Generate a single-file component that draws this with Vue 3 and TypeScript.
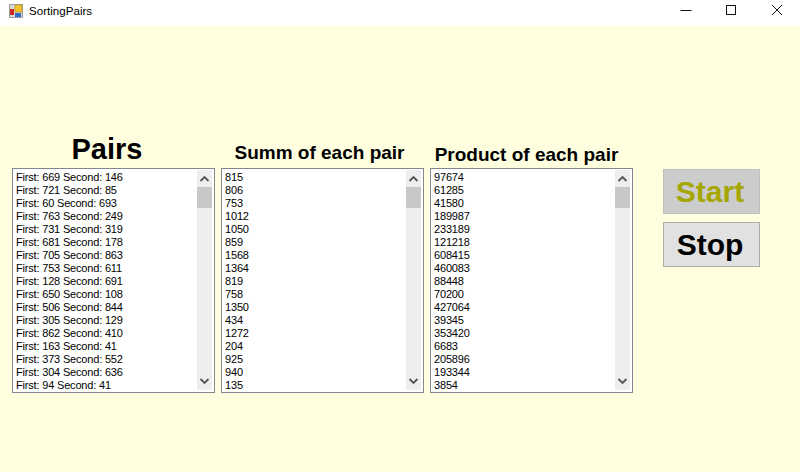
<script setup lang="ts">
interface ListColumn {
  title: string
  size: string
  rows: string[]
}

const pairs: [number, number][] = [
  [669, 146], [721, 85], [60, 693], [763, 249], [731, 319], [681, 178],
  [705, 863], [753, 611], [128, 691], [650, 108], [506, 844], [305, 129],
  [862, 410], [163, 41], [373, 552], [304, 636], [94, 41],
]

const columns: ListColumn[] = [
  {
    title: 'Pairs',
    size: 'big',
    rows: pairs.map(([a, b]) => `First: ${a} Second: ${b}`),
  },
  {
    title: 'Summ of each pair',
    size: 'mid',
    rows: ['815', '806', '753', '1012', '1050', '859', '1568', '1364', '819', '758', '1350', '434', '1272', '204', '925', '940', '135'],
  },
  {
    title: 'Product of each pair',
    size: 'low',
    rows: ['97674', '61285', '41580', '189987', '233189', '121218', '608415', '460083', '88448', '70200', '427064', '39345', '353420', '6683', '205896', '193344', '3854'],
  },
]
</script>

<template>
  <div class="window">
    <header class="titlebar">
      <div class="title-left">
        <svg class="app-icon" width="14" height="14" viewBox="0 0 14 14">
          <rect x="0.5" y="0.5" width="13" height="13" fill="#d8d8d8" stroke="#a0a0a0" />
          <rect x="6" y="1" width="7" height="7" fill="#f2c230" stroke="#b98a10" stroke-width="0.6" />
          <rect x="1" y="5" width="4" height="6" fill="#c8281e" />
          <rect x="6" y="9" width="6" height="4" fill="#2f6fc8" />
        </svg>
        <span class="app-name">SortingPairs</span>
      </div>
      <div class="controls">
        <svg width="46" height="26" viewBox="0 0 46 26">
          <path d="M17.5 10.5h11" stroke="#111" fill="none" />
        </svg>
        <svg width="46" height="26" viewBox="0 0 46 26">
          <rect x="17.5" y="5.5" width="9" height="9" stroke="#111" fill="none" />
        </svg>
        <svg width="46" height="26" viewBox="0 0 46 26">
          <path d="M17 5l10 10M27 5L17 15" stroke="#111" fill="none" />
        </svg>
      </div>
    </header>

    <main class="client">
      <section v-for="col in columns" :key="col.title" class="column">
        <h2 :class="['heading', col.size]">{{ col.title }}</h2>
        <div class="listbox">
          <ul class="rows">
            <li v-for="(row, i) in col.rows" :key="i">{{ row }}</li>
          </ul>
          <div class="scrollbar">
            <svg class="arrow" width="15" height="17" viewBox="0 0 15 17">
              <path d="M3.5 11L7.5 7l4 4" stroke="#555" stroke-width="1.8" fill="none" />
            </svg>
            <div class="thumb"></div>
            <svg class="arrow down" width="15" height="17" viewBox="0 0 15 17">
              <path d="M3.5 6l4 4 4-4" stroke="#555" stroke-width="1.8" fill="none" />
            </svg>
          </div>
        </div>
      </section>

      <div class="buttons">
        <button class="btn start">Start</button>
        <button class="btn stop">Stop</button>
      </div>
    </main>
  </div>
</template>

<style>
html,
body {
  margin: 0;
  background: #ffffe0;
}
</style>

<style scoped>
.window {
  width: 800px;
  height: 472px;
  display: flex;
  flex-direction: column;
  font-family: "Liberation Sans", Arial, sans-serif;
  overflow: hidden;
}

.titlebar {
  height: 26px;
  flex: none;
  background: #fff;
  display: flex;
  justify-content: space-between;
}

.title-left {
  display: flex;
  align-items: center;
  padding: 0 0 5px 9px;
  gap: 6px;
}

.app-name {
  font-size: 11.6px;
  color: #000;
}

.controls {
  display: flex;
  margin-right: -1px;
}

.client {
  flex: 1;
  background: #ffffe0;
  display: flex;
  align-items: flex-start;
  padding: 142px 0 0 12px;
}

.column {
  width: 203px;
  margin-right: 6px;
  height: 225px;
  position: relative;
}

.heading {
  margin: 0;
  font-weight: bold;
  color: #000;
  text-align: center;
  white-space: nowrap;
  position: absolute;
  left: 0;
  right: 0;
}

.heading.big {
  font-size: 29px;
  line-height: 32px;
  top: -35px;
  text-indent: -13px;
}

.heading.mid {
  font-size: 19px;
  line-height: 22px;
  top: -26px;
  text-indent: -6px;
}

.heading.low {
  font-size: 19px;
  line-height: 22px;
  top: -24px;
  text-indent: -10px;
}

.listbox {
  height: 225px;
  box-sizing: border-box;
  border: 1px solid #828790;
  background: #fff;
  display: flex;
  overflow: hidden;
}

.rows {
  flex: 1;
  list-style: none;
  margin: 0;
  padding: 2px 0 0 3px;
  font-size: 11px;
  letter-spacing: -0.18px;
  line-height: 13px;
  color: #000;
  white-space: nowrap;
  overflow: hidden;
}

.scrollbar {
  width: 15px;
  margin: 1px 2px 2px 0;
  background: #eee;
  display: flex;
  flex-direction: column;
  flex: none;
}

.arrow {
  display: block;
  flex: none;
}

.arrow.down {
  margin-top: auto;
}

.thumb {
  height: 21px;
  background: #c8c8c8;
}

.buttons {
  margin-left: 24px;
  padding-top: 1px;
  display: flex;
  flex-direction: column;
  gap: 8px;
}

.btn {
  width: 97px;
  height: 45px;
  box-sizing: border-box;
  padding: 0 3px 0 0;
  font-family: "Liberation Sans", Arial, sans-serif;
  font-size: 30px;
  font-weight: bold;
}

.start {
  background: #ccc;
  border: 1px solid #bfbfbf;
  color: #a6a600;
}

.stop {
  background: #e1e1e1;
  border: 1px solid #adadad;
  color: #000;
}
</style>
